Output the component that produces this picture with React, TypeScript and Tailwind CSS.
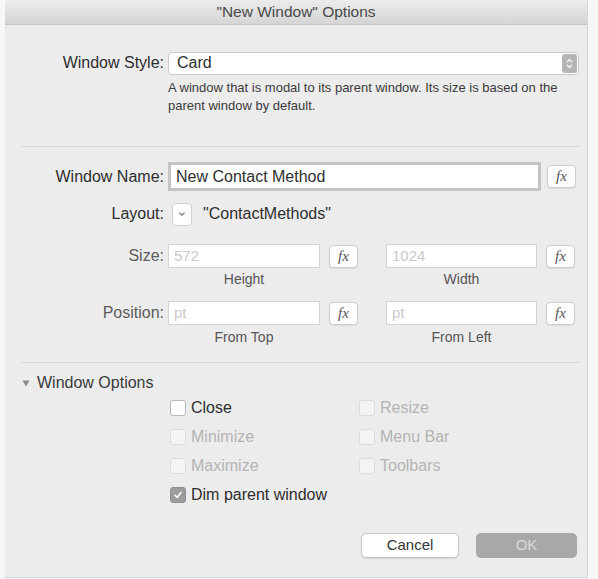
import React from 'react';

const Fx = ({ className = '' }: { className?: string }) => (
  <button
    type="button"
    className={`w-[29px] h-[23px] shrink-0 bg-[#fdfdfd] border border-[#cfcfcf] rounded-[4px] shadow-[0_1px_1px_rgba(0,0,0,0.08)] flex items-center justify-center font-['Liberation_Serif',serif] italic text-[15px] text-[#555] ${className}`}
  >
    fx
  </button>
);

const Label = ({ children, muted = false }: { children: React.ReactNode; muted?: boolean }) => (
  <div className={`w-[159px] shrink-0 text-right ${muted ? 'text-[#5c5c5c]' : 'text-[#2e2e2e]'}`}>{children}</div>
);

const Check = ({ label, enabled = false, checked = false }: { label: string; enabled?: boolean; checked?: boolean }) => (
  <div className="h-[29px] flex items-center gap-[5px]">
    {checked ? (
      <span className="w-[16px] h-[16px] rounded-[3px] bg-[#9c9c9c] border border-[#8f8f8f] flex items-center justify-center">
        <svg width="10" height="10" viewBox="0 0 10 10">
          <path d="M2 5.2 L4.2 7.4 L8 2.6" fill="none" stroke="#ffffff" strokeWidth="1.6" strokeLinecap="round" strokeLinejoin="round" />
        </svg>
      </span>
    ) : (
      <span
        className={`w-[16px] h-[16px] rounded-[3px] ${
          enabled ? 'bg-white border border-[#b9b9b9]' : 'bg-[#f4f4f4] border border-[#dcdcdc]'
        }`}
      />
    )}
    <span className={enabled ? 'text-[#2e2e2e]' : 'text-[#b4b4b4]'}>{label}</span>
  </div>
);

const NumberInput = ({ placeholder, width }: { placeholder: string; width: string }) => (
  <div className={`${width} h-[24px] bg-white border border-[#d3d3d3] flex items-center px-[5px] text-[15px] text-[#c9c9c9]`}>
    {placeholder}
  </div>
);

export default function App() {
  return (
    <div className="w-[598px] h-[579px] bg-[#f7f7f7] pl-[5px] pr-[10px] pb-px font-['Liberation_Sans',Arial,sans-serif] text-[16px]">
      <div className="h-full flex flex-col bg-[#ececec] border-r border-b border-[#d6d6d6]">
        {/* title bar */}
        <div className="h-[25px] shrink-0 bg-gradient-to-b from-[#ececec] to-[#d5d5d5] border-b border-[#c4c4c4] flex items-center justify-center text-[15.5px] text-[#4a4a4a] leading-none">
          "New Window" Options
        </div>

        {/* window style */}
        <div className="mt-[26px] flex items-center gap-[4px]">
          <Label>Window Style:</Label>
          <div className="w-[411px] h-[23px] bg-white border border-[#cacaca] rounded-[4px] flex items-center justify-between pl-[8px] pr-[1px] text-[#2e2e2e]">
            <span>Card</span>
            <span className="w-[15px] h-[19px] rounded-[3px] bg-[#b5b5b5] flex items-center justify-center">
              <svg width="7" height="11" viewBox="0 0 7 11">
                <path d="M1 4 L3.5 1.5 L6 4 M1 7 L3.5 9.5 L6 7" fill="none" stroke="#ffffff" strokeWidth="1.2" />
              </svg>
            </span>
          </div>
        </div>
        <p className="ml-[163px] mt-[4px] w-[412px] text-[13px] leading-[18px] text-[#3a3a3a]">
          A window that is modal to its parent window. Its size is based on the parent window by default.
        </p>

        <div className="mt-[31px] ml-[16px] w-[559px] h-px bg-[#d9d9d9]" />

        {/* window name */}
        <div className="mt-[15px] flex items-center gap-[4px]">
          <Label>Window Name:</Label>
          <div className="w-[373px] h-[29px] bg-white border-[3px] border-[#c4c4c4] flex items-center px-[5px] text-[#2e2e2e]">
            New Contact Method
          </div>
          <Fx className="ml-[2px]" />
        </div>

        {/* layout */}
        <div className="mt-[11px] flex items-center gap-[4px]">
          <Label>Layout:</Label>
          <div className="ml-[4px] w-[20px] h-[23px] bg-white border border-[#d0d0d0] rounded-[4px] flex items-center justify-center">
            <svg width="8" height="6" viewBox="0 0 8 6">
              <path d="M1.5 1.8 L4 4.2 L6.5 1.8" fill="none" stroke="#777" strokeWidth="1.2" />
            </svg>
          </div>
          <span className="ml-[7px] text-[#2e2e2e]">"ContactMethods"</span>
        </div>

        {/* size */}
        <div className="mt-[18px] flex items-center gap-[4px]">
          <Label muted>Size:</Label>
          <NumberInput placeholder="572" width="w-[152px]" />
          <Fx className="ml-[5px]" />
          <div className="ml-[24px]">
            <NumberInput placeholder="1024" width="w-[151px]" />
          </div>
          <Fx className="ml-[5px]" />
        </div>
        <div className="mt-[3px] flex h-[17px] text-[14px] leading-[17px] text-[#555]">
          <div className="w-[163px]" />
          <div className="w-[152px] text-center">Height</div>
          <div className="w-[66px]" />
          <div className="w-[151px] text-center">Width</div>
        </div>

        {/* position */}
        <div className="mt-[13px] flex items-center gap-[4px]">
          <Label muted>Position:</Label>
          <NumberInput placeholder="pt" width="w-[152px]" />
          <Fx className="ml-[5px]" />
          <div className="ml-[24px]">
            <NumberInput placeholder="pt" width="w-[151px]" />
          </div>
          <Fx className="ml-[5px]" />
        </div>
        <div className="mt-[4px] flex h-[17px] text-[14px] leading-[17px] text-[#555]">
          <div className="w-[163px]" />
          <div className="w-[152px] text-center">From Top</div>
          <div className="w-[66px]" />
          <div className="w-[151px] text-center">From Left</div>
        </div>

        <div className="mt-[16px] ml-[16px] w-[559px] h-px bg-[#d9d9d9]" />

        {/* window options */}
        <div className="mt-[11px] h-[18px] flex items-center ml-[17px] gap-[7px] text-[#3a3a3a]">
          <svg width="8" height="7" viewBox="0 0 8 7">
            <path d="M0.5 0.5 L7.5 0.5 L4 6.5 Z" fill="#8a8a8a" />
          </svg>
          <span>Window Options</span>
        </div>
        <div className="mt-px ml-[165px] grid grid-cols-[189px_auto]">
          <Check label="Close" enabled />
          <Check label="Resize" />
          <Check label="Minimize" />
          <Check label="Menu Bar" />
          <Check label="Maximize" />
          <Check label="Toolbars" />
          <Check label="Dim parent window" enabled checked />
        </div>

        {/* buttons */}
        <div className="mt-[24px] mr-[10px] flex justify-end gap-[17px] text-[15px]">
          <button
            type="button"
            className="w-[98px] h-[25px] bg-white border border-[#c6c6c6] rounded-[5px] shadow-[0_1px_1px_rgba(0,0,0,0.1)] text-[#333]"
          >
            Cancel
          </button>
          <button type="button" className="w-[101px] h-[25px] bg-[#a8a8a8] rounded-[5px] text-[#dadada]">
            OK
          </button>
        </div>
      </div>
    </div>
  );
}
